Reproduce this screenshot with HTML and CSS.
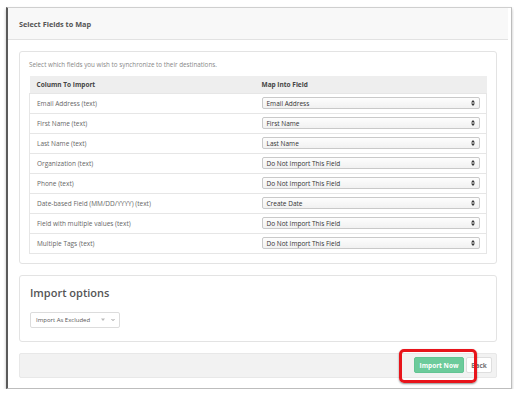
FILE: index.html
```html
<!DOCTYPE html>
<html lang="en">
<head>
    <meta charset="UTF-8">
    <meta name="viewport" content="width=device-width, initial-scale=1.0">
    <title>Select Fields to Map</title>
    <link rel="stylesheet" href="styles.css">
</head>
<body>
    <div class="window">
        <div class="pane">
            <div class="pane-head">Select Fields to Map</div>
            <div class="pane-body">
                <div class="card">
                    <p class="desc">Select which fields you wish to synchronize to their destinations.</p>
                    <table class="fields">
                        <thead>
                            <tr><th class="col1">Column To Import</th><th>Map Into Field</th></tr>
                        </thead>
                        <tbody>
                            <tr><td>Email Address (text)</td><td><div class="select"><span>Email Address</span><svg class="arrows" width="4" height="6" viewBox="0 0 4 6"><path d="M0 2.4 2 0 4 2.4Z M0 3.6 2 6 4 3.6Z" fill="#333"/></svg></div></td></tr>
                            <tr><td>First Name (text)</td><td><div class="select"><span>First Name</span><svg class="arrows" width="4" height="6" viewBox="0 0 4 6"><path d="M0 2.4 2 0 4 2.4Z M0 3.6 2 6 4 3.6Z" fill="#333"/></svg></div></td></tr>
                            <tr><td>Last Name (text)</td><td><div class="select"><span>Last Name</span><svg class="arrows" width="4" height="6" viewBox="0 0 4 6"><path d="M0 2.4 2 0 4 2.4Z M0 3.6 2 6 4 3.6Z" fill="#333"/></svg></div></td></tr>
                            <tr><td>Organization (text)</td><td><div class="select"><span>Do Not Import This Field</span><svg class="arrows" width="4" height="6" viewBox="0 0 4 6"><path d="M0 2.4 2 0 4 2.4Z M0 3.6 2 6 4 3.6Z" fill="#333"/></svg></div></td></tr>
                            <tr><td>Phone (text)</td><td><div class="select"><span>Do Not Import This Field</span><svg class="arrows" width="4" height="6" viewBox="0 0 4 6"><path d="M0 2.4 2 0 4 2.4Z M0 3.6 2 6 4 3.6Z" fill="#333"/></svg></div></td></tr>
                            <tr><td>Date-based Field (MM/DD/YYYY) (text)</td><td><div class="select"><span>Create Date</span><svg class="arrows" width="4" height="6" viewBox="0 0 4 6"><path d="M0 2.4 2 0 4 2.4Z M0 3.6 2 6 4 3.6Z" fill="#333"/></svg></div></td></tr>
                            <tr><td>Field with multiple values (text)</td><td><div class="select"><span>Do Not Import This Field</span><svg class="arrows" width="4" height="6" viewBox="0 0 4 6"><path d="M0 2.4 2 0 4 2.4Z M0 3.6 2 6 4 3.6Z" fill="#333"/></svg></div></td></tr>
                            <tr><td>Multiple Tags (text)</td><td><div class="select"><span>Do Not Import This Field</span><svg class="arrows" width="4" height="6" viewBox="0 0 4 6"><path d="M0 2.4 2 0 4 2.4Z M0 3.6 2 6 4 3.6Z" fill="#333"/></svg></div></td></tr>
                        </tbody>
                    </table>
                </div>

                <div class="card options">
                    <h2>Import options</h2>
                    <div class="option-select">
                        <span>Import As Excluded</span>
                        <svg class="carets" width="14" height="4" viewBox="0 0 14 4"><path d="M0 0.5 4 0.5 2 3Z" fill="#bbb"/><path d="M10.5 1 12 2.6 13.5 1" fill="none" stroke="#888" stroke-width="0.8"/></svg>
                    </div>
                </div>

                <div class="actions">
                    <button class="btn btn-import">Import Now</button>
                    <button class="btn btn-back">Back</button>
                    <div class="highlight"></div>
                </div>
            </div>
        </div>
    </div>
</body>
</html>
```

FILE: styles.css
```css
* {
    margin: 0;
    padding: 0;
    box-sizing: border-box;
}

body {
    font-family: 'Open Sans', sans-serif;
    background: #fff;
    color: #555;
}

.window {
    margin: 7px 0 0 6px;
    width: 506px;
    height: 382px;
    border-top: 1px solid #cfcfcf;
    border-left: 2px solid #5a5a5a;
    border-right: 1px solid #bdbdbd;
    border-bottom: 1px solid #bdbdbd;
    padding-right: 3px;
    box-shadow: 0 2px 3px rgba(0, 0, 0, 0.25);
    background: #fff;
}

.pane {
    height: 100%;
    background: #fff;
}

.pane-head {
    height: 32px;
    background: #f8f8f8;
    border-bottom: 1px solid #e2e2e2;
    padding-left: 11px;
    display: flex;
    align-items: center;
    font-size: 7.3px;
    font-weight: 700;
    color: #555;
}

.pane-body {
    padding: 11px;
}

.card {
    border: 1px solid #e3e3e3;
    border-radius: 3px;
    padding: 8px 9px 9px;
    background: #fff;
}

.desc {
    font-size: 6.3px;
    color: #888;
    line-height: 10px;
    margin-bottom: 6px;
}

.fields {
    width: 100%;
    border-collapse: collapse;
    font-size: 6.5px;
}

.fields th {
    background: #eeeeee;
    height: 17px;
    text-align: left;
    font-weight: 700;
    color: #444;
    padding: 0 7px;
}

.fields th.col1 {
    width: 225px;
}

.fields td {
    height: 20px;
    border: 1px solid #e6e6e6;
    border-left: none;
    border-right: none;
    padding: 0 7px;
    color: #666;
}

.fields tr td:first-child {
    border-left: 1px solid #e6e6e6;
}

.fields tr td:last-child {
    border-right: 1px solid #e6e6e6;
    padding-right: 6px;
}

.select {
    height: 12px;
    border: 1px solid #c9c9c9;
    border-radius: 2px;
    background: linear-gradient(#fdfdfd, #f1f1f1);
    display: flex;
    align-items: center;
    justify-content: space-between;
    padding: 0 4px 0 4px;
    color: #333;
    font-size: 6.5px;
}

.options {
    margin-top: 11px;
    height: 67px;
    padding: 9px 10px;
}

.options h2 {
    font-size: 11px;
    font-weight: 600;
    color: #555;
    line-height: 15px;
    margin-bottom: 12px;
}

.option-select {
    width: 90px;
    height: 16px;
    border: 1px solid #dcdcdc;
    border-radius: 2px;
    display: flex;
    align-items: center;
    justify-content: space-between;
    padding: 0 4px 0 5px;
    font-size: 6px;
    color: #555;
}

.actions {
    position: relative;
    margin-top: 11px;
    height: 25px;
    background: #f2f2f2;
    border: 1px solid #e8e8e8;
    border-radius: 2px;
    display: flex;
    align-items: center;
    justify-content: flex-end;
    gap: 2px;
    padding-right: 4px;
}

.btn {
    font-family: 'Open Sans', sans-serif;
    font-size: 6.5px;
    font-weight: 700;
    height: 16px;
    border-radius: 2px;
    cursor: pointer;
}

.btn-import {
    width: 50px;
    background: #6ccb9b;
    border: 1px solid #63c493;
    color: #fff;
}

.btn-back {
    width: 26px;
    background: #fff;
    border: 1px solid #dedede;
    color: #777;
}

.highlight {
    position: absolute;
    left: 379px;
    top: -5px;
    width: 78px;
    height: 34px;
    border: 3px solid #e8141b;
    border-radius: 5px;
    box-shadow: 0 1px 2px rgba(0, 0, 0, 0.45);
}
```
